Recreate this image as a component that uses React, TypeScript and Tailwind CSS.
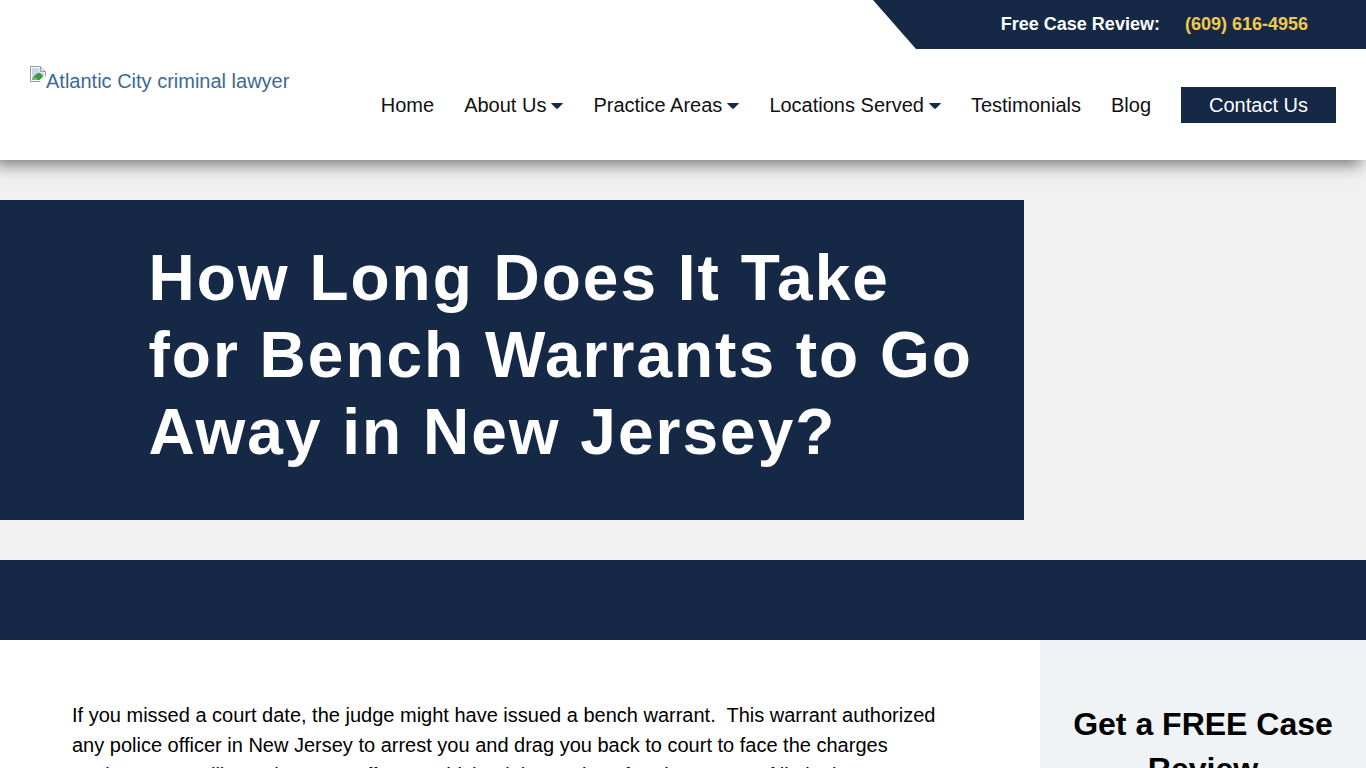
const font = "font-['Liberation_Sans',Arial,sans-serif]";

function Caret() {
  return (
    <svg width="12" height="6" viewBox="0 0 12 6" className="ml-[5px] mt-[2px]" aria-hidden="true">
      <path d="M0.4 0 H11.6 Q12 0.3 11.6 0.8 L6.6 5.7 Q6 6 5.4 5.7 L0.4 0.8 Q0 0.3 0.4 0 Z" fill="#152947" />
    </svg>
  );
}

function BrokenImage() {
  return (
    <svg width="16" height="16" viewBox="0 0 16 16" className="shrink-0" aria-hidden="true">
      <path d="M0.5 0.5 H10.5 L15.5 5.5 V15.5 H0.5 Z" fill="#fff" stroke="#9a9a9a" />
      <path d="M10.5 0.5 V5.5 H15.5" fill="#e8e8e8" stroke="#9a9a9a" />
      <path d="M2 2 H9.5 V6.5 H14 V10 L10 14 H2 Z" fill="#c6d6f2" />
      <path d="M2 14 C4 9 7 7 9 7 C11 7 12.5 9 13 10.5 L9.5 14 Z" fill="#3f9a3a" />
      <path d="M2 14 L5 11 L8 14 Z" fill="#74bf66" />
      <path d="M16 10 L10 16 H16 Z" fill="#fff" />
    </svg>
  );
}

const nav = [
  { label: "Home" },
  { label: "About Us", caret: true },
  { label: "Practice Areas", caret: true },
  { label: "Locations Served", caret: true },
  { label: "Testimonials" },
  { label: "Blog" },
];

export default function App() {
  return (
    <div className={`${font} h-[768px] overflow-hidden bg-[#f1f1f1] text-black`}>
      <header className="relative z-10 h-[160px] bg-white shadow-[-5px_5px_15px_rgba(0,0,0,0.5)]">
        <div className="flex h-[49px] justify-end">
          <div className="flex w-[493px] items-center justify-end bg-[#152947] pr-[58px] text-[18px] font-bold [clip-path:polygon(0_0,100%_0,100%_100%,43px_100%)]">
            <span className="text-white">Free Case Review:</span>
            <span className="ml-[25px] text-[#f2c94c]">(609) 616-4956</span>
          </div>
        </div>
        <div className="flex items-start justify-between pl-[30px] pr-[30px]">
          <a className="mt-[17px] flex items-start text-[20px] leading-[30px] text-[#3b6a94]">
            <BrokenImage />
            <span>Atlantic City criminal lawyer</span>
          </a>
          <nav className="mt-[38px] flex items-center gap-[30px] text-[20px]">
            {nav.map((n) => (
              <a key={n.label} className="flex items-center leading-[36px] text-[#111]">
                {n.label}
                {n.caret && <Caret />}
              </a>
            ))}
            <a className="flex h-[36px] w-[155px] items-center justify-center bg-[#152947] text-white">Contact Us</a>
          </nav>
        </div>
      </header>

      <main className="pt-[40px]">
        <div className="flex h-[320px] w-[1024px] items-center bg-[#152947] pb-[10px] pl-[148.5px]">
          <h1 className="text-[64px] leading-[77px] font-bold tracking-[2px] text-white">
            How Long Does It Take
            <br />
            for Bench Warrants to Go
            <br />
            Away in New Jersey?
          </h1>
        </div>
        <div className="mt-[40px] h-[80px] bg-[#152947]" />
        <div className="flex h-[128px] overflow-hidden bg-white">
          <div className="w-[1040px] pl-[72px] pt-[60px] text-[20px] leading-[30px] text-black">
            <p className="whitespace-pre">
              {"If you missed a court date, the judge might have issued a bench warrant.  This warrant authorized\nany police officer in New Jersey to arrest you and drag you back to court to face the charges\nagainst you. Unlike an innocent offense, which might receive after the statute of limitations"}
            </p>
          </div>
          <div className="flex-1 bg-[#f0f3f6] px-[30px] pt-[64px] text-center text-[32px] leading-[40px] font-bold">
            <p>Get a FREE Case</p>
            <p className="mt-[5px]">Review</p>
          </div>
        </div>
      </main>
    </div>
  );
}
